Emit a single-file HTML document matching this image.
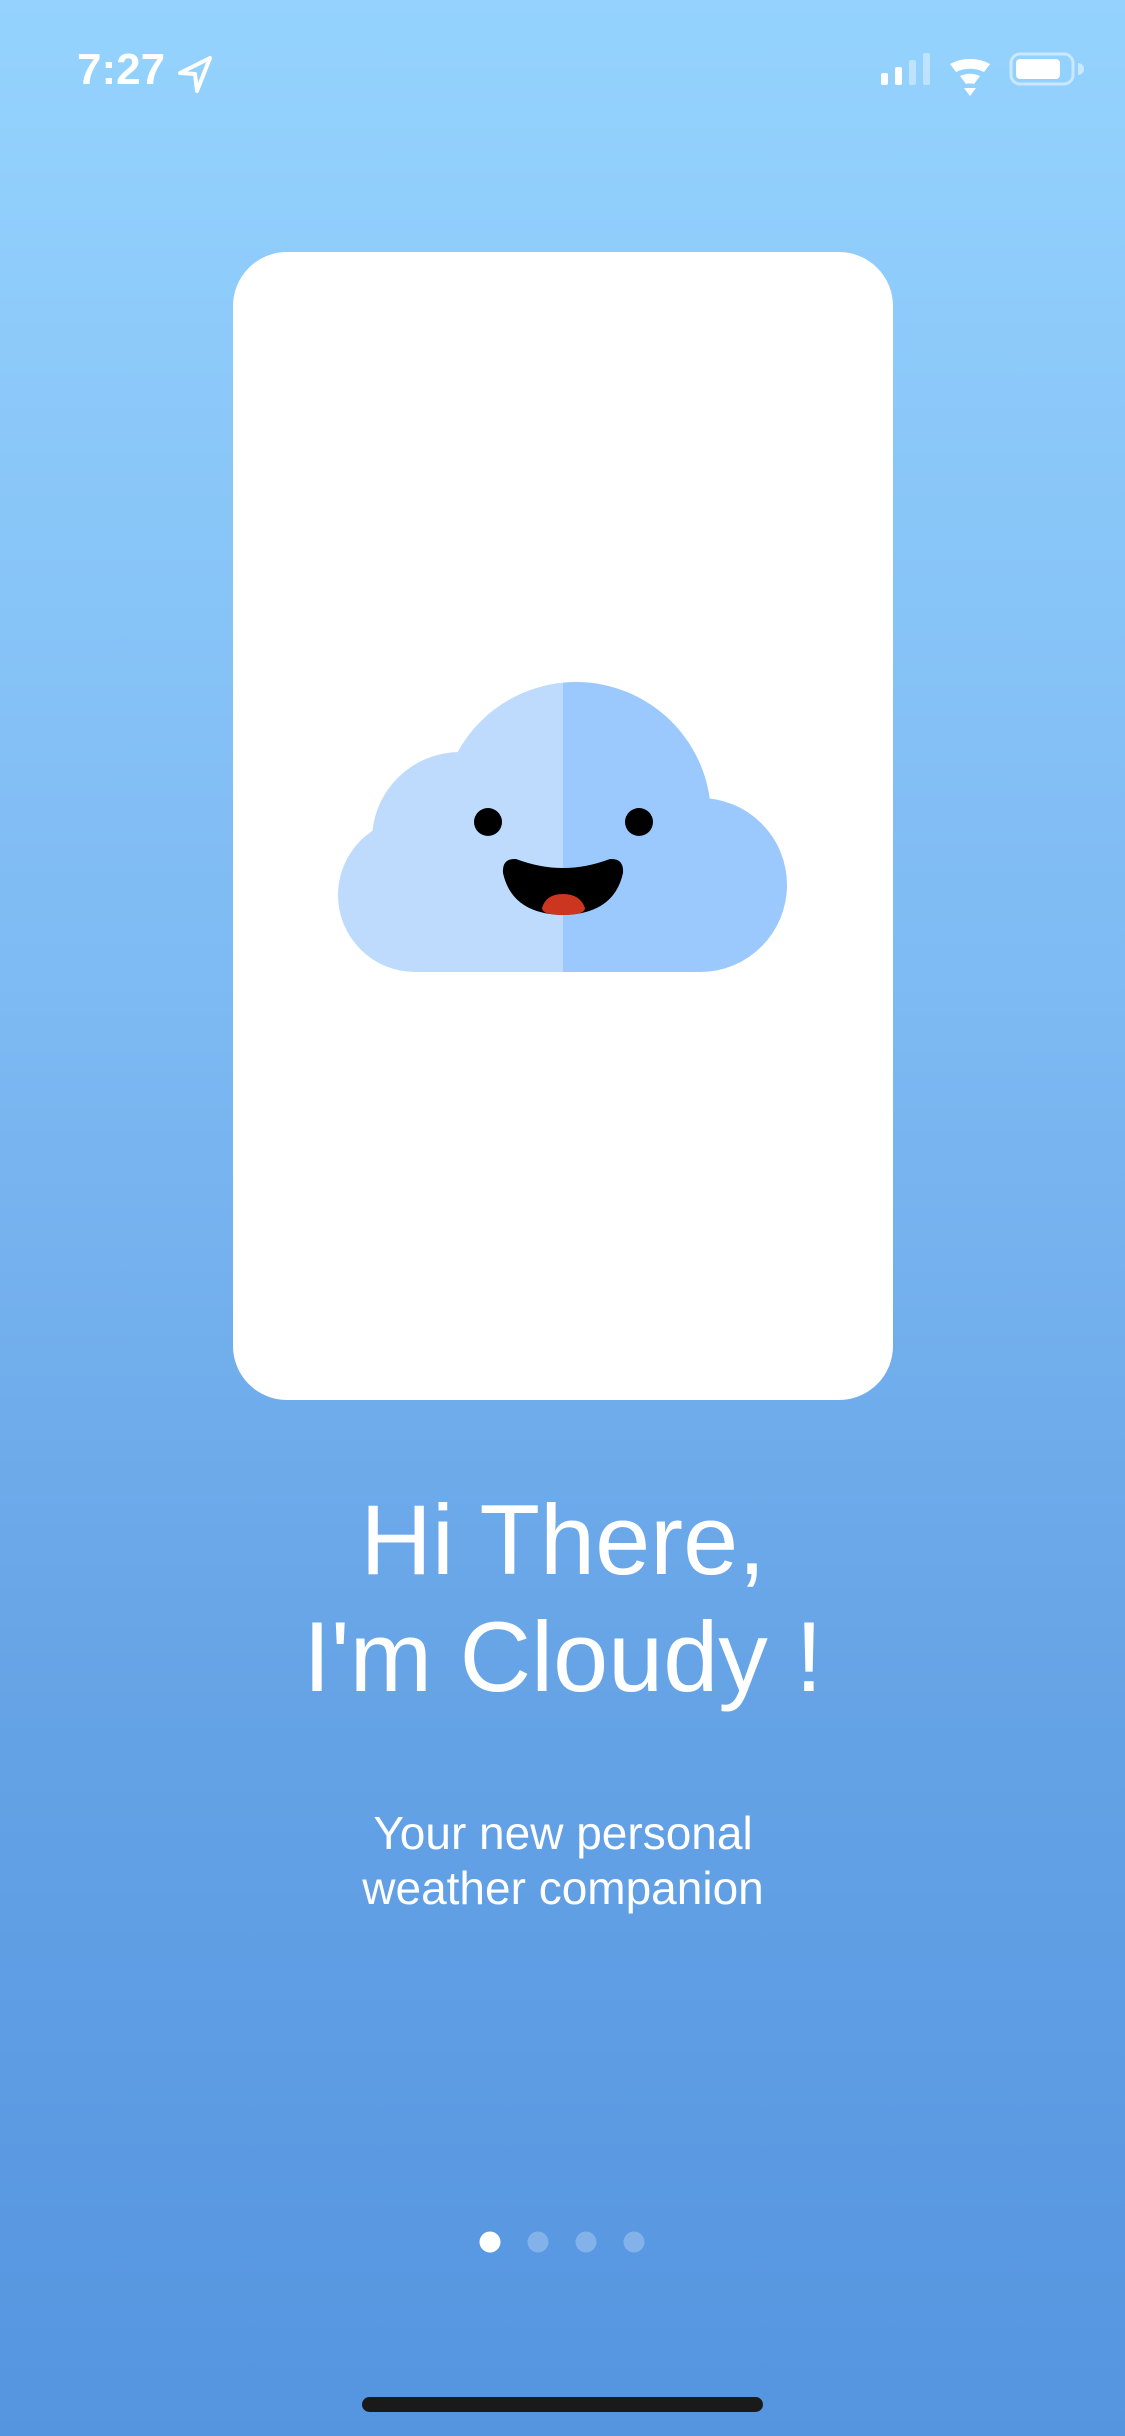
<!DOCTYPE html>
<html><head><meta charset="utf-8"><style>
html,body{margin:0;padding:0}
body{width:1125px;height:2436px;overflow:hidden;background:linear-gradient(180deg,#95D3FE 0%,#7EBAF3 40%,#65A3E6 70%,#5595E0 100%);font-family:"Liberation Sans",sans-serif}
</style></head><body>
<svg width="1125" height="2436" viewBox="0 0 1125 2436" xmlns="http://www.w3.org/2000/svg" style="position:absolute;left:0;top:0">
<!-- status bar -->
<text x="77" y="84" font-family="Liberation Sans, sans-serif" font-weight="bold" font-size="44" fill="#fff">7:27</text>
<path d="M210 58 L197 91 L195 74 L180 73 Z" fill="none" stroke="#fff" stroke-width="4" stroke-linejoin="round"/>
<rect x="881" y="73" width="7" height="12" rx="2" fill="#fff"/>
<rect x="895" y="67" width="7" height="18" rx="2" fill="#fff"/>
<rect x="909" y="60" width="7" height="25" rx="2" fill="#fff" opacity="0.4"/>
<rect x="923" y="53" width="7" height="32" rx="2" fill="#fff" opacity="0.4"/>
<path d="M950 64 A42 42 0 0 1 990 64 L984 72 A32 32 0 0 0 956 72 Z" fill="#fff"/>
<path d="M960 76 A24 24 0 0 1 980 76 L974 84 A14 14 0 0 0 966 84 Z" fill="#fff"/>
<path d="M964 88 L976 88 L970 96 Z" fill="#fff"/>
<rect x="1011" y="54" width="62" height="30" rx="9" fill="none" stroke="#fff" stroke-opacity="0.5" stroke-width="3"/>
<rect x="1016" y="59" width="44" height="20" rx="4" fill="#fff"/>
<path d="M1078 63 A6 6 0 0 1 1078 75 Z" fill="#fff" opacity="0.5"/>
<!-- card -->
<rect x="233" y="252" width="660" height="1148" rx="54" fill="#fff"/>
<!-- cloud -->
<defs><clipPath id="L"><rect x="300" y="600" width="263" height="400"/></clipPath><clipPath id="R"><rect x="563" y="600" width="300" height="400"/></clipPath>
<g id="cl"><circle cx="576" cy="817" r="135"/><circle cx="700" cy="885" r="87"/><circle cx="415" cy="895" r="77"/><circle cx="460" cy="840" r="88"/><rect x="415" y="860" width="285" height="112"/></g></defs>
<use href="#cl" fill="#BEDBFE" clip-path="url(#L)"/>
<use href="#cl" fill="#9BC8FD" clip-path="url(#R)"/>
<circle cx="488" cy="822" r="14" fill="#000"/>
<circle cx="639" cy="822" r="14" fill="#000"/>
<path d="M516 859 Q540 868 563 868 Q586 868 610 859 Q624 858 623 873 Q614 914 563 915 Q512 914 503 873 Q502 858 516 859 Z" fill="#000"/>
<path d="M542 908 Q546 894 563 894 Q580 894 585 908 Q585 915 563 915 Q542 915 542 908 Z" fill="#CC3520"/>
<!-- text -->
<g font-family="Liberation Sans, sans-serif" fill="#fff" text-anchor="middle">
<text x="563" y="1574" font-size="99">Hi There,</text>
<text x="563" y="1691" font-size="99">I'm Cloudy !</text>
<text x="563" y="1849" font-size="46">Your new personal</text>
<text x="563" y="1904" font-size="46">weather companion</text>
</g>
<!-- dots -->
<circle cx="490" cy="2242" r="10.5" fill="#fff"/>
<circle cx="538" cy="2242" r="10.5" fill="#fff" opacity="0.25"/>
<circle cx="586" cy="2242" r="10.5" fill="#fff" opacity="0.25"/>
<circle cx="634" cy="2242" r="10.5" fill="#fff" opacity="0.25"/>
<rect x="362" y="2397" width="401" height="15" rx="7.5" fill="#1a1a1a"/>
</svg>
</body></html>
